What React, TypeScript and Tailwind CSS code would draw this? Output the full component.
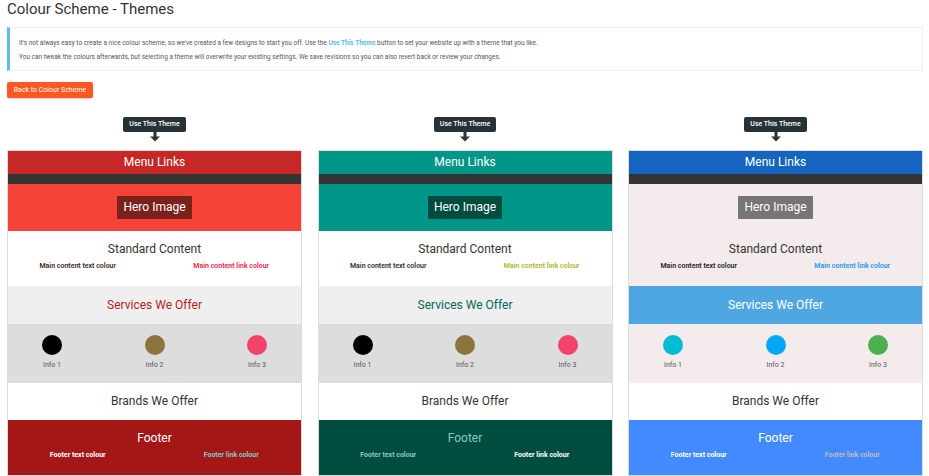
import React from 'react';

type Theme = {
  menu: string;
  hero: string;
  heroBox: string;
  content: string;
  contentText: string;
  contentLink: string;
  services: string;
  servicesText: string;
  info: string;
  dots: string[];
  footer: string;
  footerTitle: string;
  footerText: string;
  footerLink: string;
};

const THEMES: Theme[] = [
  {
    menu: 'bg-[#c62828]',
    hero: 'bg-[#f44336]',
    heroBox: 'bg-[#7b211b]',
    content: 'bg-white',
    contentText: 'text-[#3e2723]',
    contentLink: 'text-[#ff1744]',
    services: 'bg-[#efefef]',
    servicesText: 'text-[#b71c1c]',
    info: 'bg-[#dddddd]',
    dots: ['bg-black', 'bg-[#8d743c]', 'bg-[#f2436a]'],
    footer: 'bg-[#a51717]',
    footerTitle: 'text-white',
    footerText: 'text-white',
    footerLink: 'text-[#80cbc4]',
  },
  {
    menu: 'bg-[#009688]',
    hero: 'bg-[#009688]',
    heroBox: 'bg-[#004d40]',
    content: 'bg-white',
    contentText: 'text-[#263238]',
    contentLink: 'text-[#afb42b]',
    services: 'bg-[#efefef]',
    servicesText: 'text-[#00695c]',
    info: 'bg-[#dddddd]',
    dots: ['bg-black', 'bg-[#8d743c]', 'bg-[#f2436a]'],
    footer: 'bg-[#004d40]',
    footerTitle: 'text-[#80cbc4]',
    footerText: 'text-[#80cbc4]',
    footerLink: 'text-white',
  },
  {
    menu: 'bg-[#1565c0]',
    hero: 'bg-[#f4ecec]',
    heroBox: 'bg-[#777474]',
    content: 'bg-[#f4ecec]',
    contentText: 'text-[#212121]',
    contentLink: 'text-[#2196f3]',
    services: 'bg-[#4fa7e1]',
    servicesText: 'text-white',
    info: 'bg-[#f4ecec]',
    dots: ['bg-[#00bcd4]', 'bg-[#03a9f4]', 'bg-[#4caf50]'],
    footer: 'bg-[#448aff]',
    footerTitle: 'text-white',
    footerText: 'text-white',
    footerLink: 'text-[#bdbdbd]',
  },
];

const ArrowDown = () => (
  <svg width="10" height="10" viewBox="0 0 10 10" className="block">
    <rect x="3.5" y="0" width="3" height="5" fill="#333" />
    <path d="M0 4.5 L10 4.5 L5 9.5 Z" fill="#333" />
  </svg>
);

const ThemeCard = ({ t }: { t: Theme }) => (
  <div className="flex flex-col items-center">
    <button className="h-[15px] px-[6px] rounded-[2px] bg-[#263238] text-white text-[7px] leading-[15px] font-medium">
      Use This Theme
    </button>
    <div className="mb-[8px]">
      <ArrowDown />
    </div>
    <div className="w-full border border-[#dcdcdc] flex flex-col text-center">
      <div className={`${t.menu} h-[23px] flex items-center justify-center text-white text-[12px]`}>Menu Links</div>
      <div className="h-[10px] bg-[#333333]" />
      <div className={`${t.hero} h-[47px] flex items-center justify-center`}>
        <span className={`${t.heroBox} text-white text-[12px] px-[6px] h-[23px] leading-[23px] rounded-[1px]`}>Hero Image</span>
      </div>
      <div className={`${t.content} h-[55px] flex flex-col items-center pt-[11px]`}>
        <div className="text-[12px] text-[#333] leading-[15px]">Standard Content</div>
        <div className="w-[calc(100%+14px)] -mx-[7px] grid grid-cols-2 mt-[4px] text-[7px] font-semibold">
          <span className={t.contentText}>Main content text colour</span>
          <span className={t.contentLink}>Main content link colour</span>
        </div>
      </div>
      <div className={`${t.services} h-[38px] flex items-center justify-center text-[12px] ${t.servicesText}`}>Services We Offer</div>
      <div className={`${t.info} h-[59px] flex justify-between px-[34px] pt-[11px]`}>
        {t.dots.map((d, i) => (
          <div key={i} className="w-[20px] flex flex-col items-center">
            <div className={`${d} w-[20px] h-[20px] rounded-full shrink-0`} />
            <span className="mt-[5px] text-[7px] text-[#555] whitespace-nowrap">Info {i + 1}</span>
          </div>
        ))}
      </div>
      <div className="bg-white h-[37px] flex items-center justify-center text-[12px] text-[#333]">Brands We Offer</div>
      <div className={`${t.footer} h-[55px] flex flex-col items-center pt-[11px]`}>
        <div className={`text-[12px] leading-[15px] ${t.footerTitle}`}>Footer</div>
        <div className="w-[calc(100%+14px)] -mx-[7px] grid grid-cols-2 mt-[4px] text-[7px] font-bold">
          <span className={t.footerText}>Footer text colour</span>
          <span className={t.footerLink}>Footer link colour</span>
        </div>
      </div>
    </div>
  </div>
);

export default function App() {
  return (
    <div className="w-[929px] h-[476px] overflow-hidden bg-white px-[7px] text-[#333]" style={{ fontFamily: 'Roboto, "Liberation Sans", sans-serif' }}>
      <h1 className="text-[15px] leading-[19px] text-[#333]">Colour Scheme - Themes</h1>
      <div className="mt-[8px] w-[916px] h-[44px] border border-[#eeeeee] border-l-[3px] border-l-[#5bc0de] pl-[9px] pt-[8px] text-[6.5px] text-[#555] leading-[14px]">
        <p>
          It's not always easy to create a nice colour scheme, so we've created a few designs to start you off. Use the{' '}
          <span className="text-[#5bc0de] font-bold">Use This Theme</span> button to set your website up with a theme that you like.
        </p>
        <p>You can tweak the colours afterwards, but selecting a theme will overwrite your existing settings. We save revisions so you can also revert back or review your changes.</p>
      </div>
      <button className="mt-[11px] h-[16px] w-[86px] rounded-[2px] bg-[#ff5722] text-white text-[7px] shadow-[0_1px_2px_rgba(0,0,0,0.2)]">
        Back to Colour Scheme
      </button>
      <div className="mt-[18px] w-[916px] grid grid-cols-3 gap-[15.5px]">
        {THEMES.map((t, i) => (
          <ThemeCard key={i} t={t} />
        ))}
      </div>
    </div>
  );
}
